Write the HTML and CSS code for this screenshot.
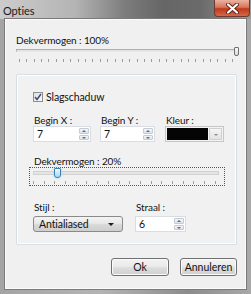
FILE: index.html
```html
<!DOCTYPE html>
<html lang="nl">
<head>
  <meta charset="UTF-8" />
  <title>Opties</title>
  <link rel="stylesheet" href="styles.css">
</head>
<body>
  <div class="window">
    <div class="titlebar">
      <span class="title">Opties</span>
      <div class="close">
        <svg width="13" height="11" viewBox="0 0 13 11">
          <path d="M2 1.5 L11 9.5 M11 1.5 L2 9.5" stroke="#5b2418" stroke-width="4" stroke-linecap="round"/>
          <path d="M2 1.5 L11 9.5 M11 1.5 L2 9.5" stroke="#fff" stroke-width="2.2" stroke-linecap="round"/>
        </svg>
      </div>
    </div>

    <div class="client">
      <div class="label main-label">Dekvermogen : 100%</div>
      <div class="slider slider-main">
        <div class="track"></div>
        <div class="thumb" style="left: 218px"></div>
        <div class="ticks"></div>
      </div>

      <div class="group">
        <div class="check-row">
          <span class="checkbox">
            <svg width="8" height="8" viewBox="0 0 8 8">
              <path d="M1 4 L3 6.5 L7 1" fill="none" stroke="#3c4f78" stroke-width="1.5"/>
            </svg>
          </span>
          <span>Slagschaduw</span>
        </div>

        <div class="fields">
          <div class="field field-x">
            <div class="label">Begin X :</div>
            <div class="spin">
              <span class="value">7</span>
              <span class="arrows"><span class="up"></span><span class="down"></span></span>
            </div>
          </div>
          <div class="field field-y">
            <div class="label">Begin Y :</div>
            <div class="spin">
              <span class="value">7</span>
              <span class="arrows"><span class="up"></span><span class="down"></span></span>
            </div>
          </div>
          <div class="field field-color">
            <div class="label">Kleur :</div>
            <div class="color-combo">
              <span class="swatch"></span>
              <span class="drop"></span>
            </div>
          </div>
        </div>

        <div class="label sub-label">Dekvermogen : 20%</div>
        <div class="slider slider-sub">
          <div class="track"></div>
          <div class="thumb" style="left: 24px"></div>
          <div class="ticks"></div>
        </div>

        <div class="fields fields-bottom">
          <div class="field field-style">
            <div class="label">Stijl :</div>
            <div class="combo">
              <span>Antialiased</span>
              <span class="caret"></span>
            </div>
          </div>
          <div class="field field-radius">
            <div class="label">Straal :</div>
            <div class="spin">
              <span class="value">6</span>
              <span class="arrows"><span class="up"></span><span class="down"></span></span>
            </div>
          </div>
        </div>
      </div>

      <div class="buttons">
        <button class="btn btn-ok">Ok</button>
        <button class="btn">Annuleren</button>
      </div>
    </div>
  </div>
</body>
</html>
```

FILE: styles.css
```css
* {
  box-sizing: border-box;
}

body {
  margin: 0;
  font-family: Lato, 'Liberation Sans', sans-serif;
  font-size: 10px;
  letter-spacing: -0.1px;
  color: #111;
}

.window {
  width: 251px;
  height: 294px;
  background: linear-gradient(to right, #a4a4a4, #b4b4b4 40%, #8c8c8c 75%, #a8a8a8);
  display: flex;
  flex-direction: column;
  overflow: hidden;
}

.titlebar {
  height: 22px;
  display: flex;
  align-items: flex-start;
  justify-content: space-between;
  background: linear-gradient(to right, #cccccc 0%, #b4b4b4 30%, #7c7c7c 50%, #666 65%, #6a6a6a 80%, #9a9a9a 100%);
}

.title {
  padding: 4px 0 0 3px;
  font-size: 11px;
  color: #1a1a1a;
}

.close {
  width: 36px;
  height: 17px;
  margin-right: 1px;
  border: 1px solid #6e3a30;
  border-top: none;
  border-radius: 0 0 4px 4px;
  background: linear-gradient(#eab2a0, #d8775c 45%, #c0391c 55%, #d4674a);
  display: flex;
  align-items: center;
  justify-content: center;
}

.close svg {
  display: block;
}

.client {
  flex: 1;
  margin: 0 5px 5px;
  padding: 13px 8px 12px 10px;
  background: #f0f0f0;
  border: 1px solid #fbfbfb;
  box-shadow: 0 0 0 1px #7a7a7a;
  display: flex;
  flex-direction: column;
}

.label {
  line-height: 12px;
  white-space: nowrap;
}

.main-label {
  line-height: 14px;
}

/* sliders */
.slider {
  position: relative;
}

.track {
  height: 3px;
  border: 1px solid #b0b0b0;
  border-bottom-color: #e8e8e8;
  background: #e2e2e2;
}

.ticks {
  height: 3px;
  background: repeating-linear-gradient(to right, #9a9a9a 0 1px, transparent 1px 7.35px);
}

.slider-main {
  height: 15px;
  padding-top: 2px;
  margin-right: 1px;
}

.slider-main .ticks {
  margin: 7px 2px 0 3px;
}

.slider-main .thumb {
  position: absolute;
  top: 0;
  width: 5px;
  height: 9px;
  border: 1px solid #707070;
  border-radius: 1px 1px 2px 2px;
  background: linear-gradient(#f8f8f8, #dcdcdc);
}

.slider-sub {
  height: 19px;
  margin: 0 11px 0 -4px;
  padding: 3px 5px 0 3px;
  border: 1px dotted #555;
}

.slider-sub .track {
  height: 4px;
  border-color: #d2d2d2;
  background: #e4e4e4;
}

.slider-sub .ticks {
  margin: 6px 0 0 0;
  background: repeating-linear-gradient(to right, #a0a0a0 0 1px, transparent 1px 10.7px);
}

.slider-sub .thumb {
  position: absolute;
  top: 0;
  width: 7px;
  height: 10px;
  border: 1px solid #3c7fb1;
  border-radius: 1px 1px 3px 3px;
  background: linear-gradient(#eaf6fd, #a7d9f5);
  box-shadow: 0 0 3px #9fd4f5;
}

/* group box */
.group {
  margin-top: 12px;
  height: 171px;
  border: 1px solid #d5dfe5;
  border-radius: 2px;
  box-shadow: inset 0 0 0 1px #fff;
  padding: 15px 0 0 16px;
  background: #f1f1f1;
}

.check-row {
  display: flex;
  align-items: center;
  gap: 3px;
  line-height: 14px;
  font-size: 10.5px;
}

.checkbox {
  width: 10px;
  height: 10px;
  border: 1px solid #8e8f8f;
  background: linear-gradient(135deg, #dedede, #fbfbfb);
  display: flex;
  align-items: center;
  justify-content: center;
}

.checkbox svg {
  display: block;
}

.fields {
  display: flex;
  margin-top: 10px;
}

.field-x {
  width: 67px;
}

.field-y {
  width: 65px;
}

.field-color {
  width: 60px;
}

.field .label {
  padding-left: 1px;
}

.spin {
  display: flex;
  height: 16px;
  width: 58px;
  border: 1px solid #d8dde3;
  background: #fff;
  padding: 1px;
}

.field-y .spin {
  width: 55px;
}

.field-radius .spin {
  width: 51px;
}

.value {
  flex: 1;
  padding-left: 2px;
  line-height: 12px;
  font-size: 10.5px;
}

.arrows {
  width: 10px;
  display: flex;
  flex-direction: column;
  gap: 1px;
}

.arrows span {
  flex: 1;
  border: 1px solid #c4cbd4;
  border-radius: 1px;
  background: linear-gradient(#f4f6f8, #dde3ea);
  position: relative;
}

.arrows span::after {
  content: "";
  position: absolute;
  left: 2px;
  top: 1px;
  border-left: 2px solid transparent;
  border-right: 2px solid transparent;
}

.arrows .up::after {
  border-bottom: 2px solid #5b6b80;
}

.arrows .down::after {
  border-top: 2px solid #5b6b80;
}

.color-combo {
  display: flex;
  height: 16px;
  width: 59px;
  border: 1px solid #c6c6c6;
  background: #f3f3f3;
  padding: 1px;
  gap: 1px;
}

.swatch {
  flex: 1;
  background: #050505;
}

.drop {
  width: 13px;
  border: 1px solid #d0d0d0;
  background: linear-gradient(#f4f4f4, #e2e2e2);
  position: relative;
}

.drop::after {
  content: "";
  position: absolute;
  left: 4px;
  top: 5px;
  border-left: 2px solid transparent;
  border-right: 2px solid transparent;
  border-top: 2px solid #8a8a8a;
}

.sub-label {
  margin-top: 13px;
  padding-left: 1px;
}

.fields-bottom {
  margin-top: 15px;
}

.fields-bottom .label {
  margin-bottom: 3px;
}

.field-style {
  width: 102px;
}

.combo {
  width: 90px;
  height: 16px;
  border: 1px solid #8a8a8a;
  border-radius: 3px;
  background: linear-gradient(#f4f4f4, #e8e8e8 45%, #d8d8d8 55%, #cfcfcf);
  display: flex;
  align-items: center;
  justify-content: space-between;
  padding: 0 8px 0 5px;
  font-size: 10.5px;
}

.caret {
  border-left: 3px solid transparent;
  border-right: 3px solid transparent;
  border-top: 3px solid #1e1e1e;
}

/* buttons */
.buttons {
  display: flex;
  justify-content: flex-end;
  gap: 11px;
  margin-top: 13px;
}

.btn {
  width: 57px;
  height: 18px;
  padding: 0;
  border: 1px solid #707070;
  border-radius: 3px;
  background: linear-gradient(#f2f2f2, #ebebeb 45%, #dddddd 55%, #cfcfcf);
  box-shadow: inset 0 0 0 1px #fbfbfb;
  font-family: Lato, 'Liberation Sans', sans-serif;
  font-size: 10.5px;
  color: #111;
  line-height: 14px;
}

.btn-ok {
  width: 58px;
}
```
